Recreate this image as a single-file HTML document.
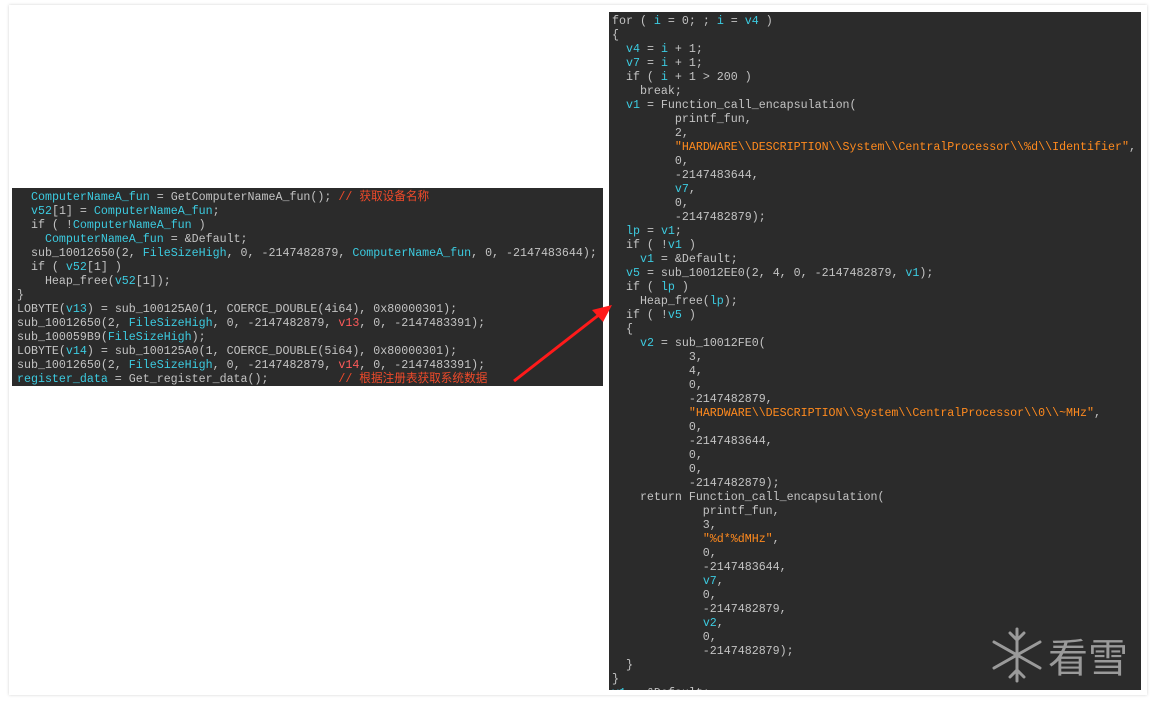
<!DOCTYPE html>
<html><head><meta charset="utf-8"><style>
html,body{margin:0;padding:0;background:#fff;width:1155px;height:702px;overflow:hidden;position:relative}
.frame{position:absolute;left:9px;top:5px;width:1138px;height:690px;box-shadow:0 0 3px rgba(0,0,0,.18);background:#fff}
.p{position:absolute;background:#2b2b2b;font-family:"Liberation Mono","Noto Sans CJK SC",monospace;font-size:11.65px;line-height:14px;color:#c3c3c3;white-space:pre;overflow:hidden}
.c{color:#3ccbe0}.r{color:#ff5a5a}.s{color:#ff8a1e}.m{color:#f04a2a}
</style></head><body>
<div class="frame"></div>
<div class="p" style="left:12px;top:188px;width:591px;height:198px;padding-left:5px;padding-top:3px;box-sizing:border-box">  <span class="c">ComputerNameA_fun</span> = GetComputerNameA_fun(); <span class="m">// 获取设备名称</span>
  <span class="c">v52</span>[1] = <span class="c">ComputerNameA_fun</span>;
  if ( !<span class="c">ComputerNameA_fun</span> )
    <span class="c">ComputerNameA_fun</span> = &amp;Default;
  sub_10012650(2, <span class="c">FileSizeHigh</span>, 0, -2147482879, <span class="c">ComputerNameA_fun</span>, 0, -2147483644);
  if ( <span class="c">v52</span>[1] )
    Heap_free(<span class="c">v52</span>[1]);
}
LOBYTE(<span class="c">v13</span>) = sub_100125A0(1, COERCE_DOUBLE(4i64), 0x80000301);
sub_10012650(2, <span class="c">FileSizeHigh</span>, 0, -2147482879, <span class="r">v13</span>, 0, -2147483391);
sub_100059B9(<span class="c">FileSizeHigh</span>);
LOBYTE(<span class="c">v14</span>) = sub_100125A0(1, COERCE_DOUBLE(5i64), 0x80000301);
sub_10012650(2, <span class="c">FileSizeHigh</span>, 0, -2147482879, <span class="r">v14</span>, 0, -2147483391);
<span class="c">register_data</span> = Get_register_data();          <span class="m">// 根据注册表获取系统数据</span></div>
<div class="p" style="left:609px;top:12px;width:532px;height:678px;padding-left:3px;padding-top:3px;box-sizing:border-box">for ( <span class="c">i</span> = 0; ; <span class="c">i</span> = <span class="c">v4</span> )
{
  <span class="c">v4</span> = <span class="c">i</span> + 1;
  <span class="c">v7</span> = <span class="c">i</span> + 1;
  if ( <span class="c">i</span> + 1 &gt; 200 )
    break;
  <span class="c">v1</span> = Function_call_encapsulation(
         printf_fun,
         2,
         <span class="s">"HARDWARE\\DESCRIPTION\\System\\CentralProcessor\\%d\\Identifier"</span>,
         0,
         -2147483644,
         <span class="c">v7</span>,
         0,
         -2147482879);
  <span class="c">lp</span> = <span class="c">v1</span>;
  if ( !<span class="c">v1</span> )
    <span class="c">v1</span> = &amp;Default;
  <span class="c">v5</span> = sub_10012EE0(2, 4, 0, -2147482879, <span class="c">v1</span>);
  if ( <span class="c">lp</span> )
    Heap_free(<span class="c">lp</span>);
  if ( !<span class="c">v5</span> )
  {
    <span class="c">v2</span> = sub_10012FE0(
           3,
           4,
           0,
           -2147482879,
           <span class="s">"HARDWARE\\DESCRIPTION\\System\\CentralProcessor\\0\\~MHz"</span>,
           0,
           -2147483644,
           0,
           0,
           -2147482879);
    return Function_call_encapsulation(
             printf_fun,
             3,
             <span class="s">"%d*%dMHz"</span>,
             0,
             -2147483644,
             <span class="c">v7</span>,
             0,
             -2147482879,
             <span class="c">v2</span>,
             0,
             -2147482879);
  }
}
<span class="c">v1</span> = &amp;Default;</div>
<svg style="position:absolute;left:0;top:0" width="1155" height="702">
<line x1="514" y1="381" x2="600" y2="314" stroke="#ff1a1a" stroke-width="3"/>
<polygon points="612,305 592,310 603,322" fill="#ff1a1a"/>
<g stroke="#9a9a9a" stroke-width="3" fill="none" stroke-linecap="round">
<line x1="1017" y1="629" x2="1017" y2="681"/>
<line x1="994" y1="642" x2="1040" y2="668"/>
<line x1="994" y1="668" x2="1040" y2="642"/>
<polyline points="1010,633 1017,640 1024,633"/>
<polyline points="1010,677 1017,670 1024,677"/>
</g>
<text x="1048" y="672" font-family="Noto Sans CJK SC,sans-serif" font-size="40" fill="#9a9a9a">看雪</text>
</svg>
</body></html>
